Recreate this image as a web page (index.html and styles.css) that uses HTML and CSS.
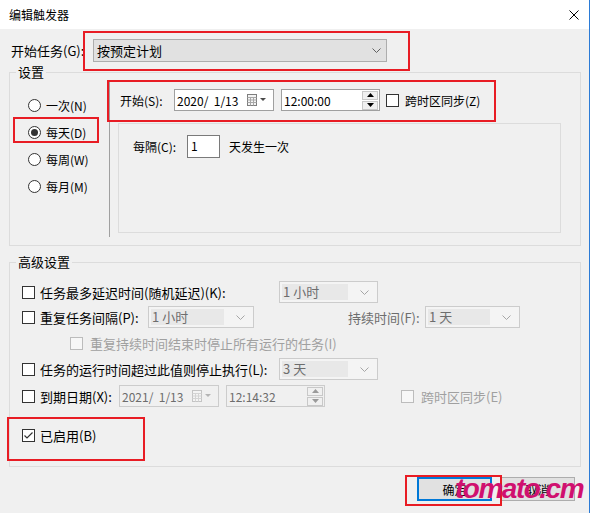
FILE: index.html
```html
<!DOCTYPE html>
<html lang="zh-CN">
<head>
    <meta charset="UTF-8">
    <meta name="viewport" content="width=device-width, initial-scale=1.0">
    <title>编辑触发器</title>
    <link rel="stylesheet" href="styles.css">
</head>
<body>
    <div class="window">
        <div class="titlebar">
            <span class="title">编辑触发器</span>
            <svg class="close" width="10" height="10" viewBox="0 0 10 10">
                <path d="M0.5 0.5 L9.5 9.5 M9.5 0.5 L0.5 9.5" stroke="#000" stroke-width="1" fill="none"/>
            </svg>
        </div>

        <div class="content">
            <div class="task-row">
                <span class="task-label">开始任务(G):</span>
                <div class="combo combo-main">
                    <span>按预定计划</span>
                    <svg width="9" height="5" viewBox="0 0 9 5"><path d="M0.5 0.5 L4.5 4.5 L8.5 0.5" stroke="#606060" fill="none"/></svg>
                </div>
            </div>

            <fieldset class="group">
                <legend>设置</legend>
                <div class="settings-body">
                    <div class="freq-list">
                        <div class="radio-row"><span class="radio"></span>一次(N)</div>
                        <div class="radio-row"><span class="radio checked"></span>每天(D)</div>
                        <div class="radio-row"><span class="radio"></span>每周(W)</div>
                        <div class="radio-row"><span class="radio"></span>每月(M)</div>
                    </div>
                    <div class="freq-detail">
                        <div class="start-row">
                            <span class="start-label">开始(S):</span>
                            <div class="field date-box">
                                <span class="field-text">2020/  1/13</span>
                                <svg class="cal-icon" width="20" height="12" viewBox="0 0 20 12">
                                    <rect x="0.5" y="0.5" width="9" height="11" fill="#f4f4f4" stroke="#7d7d7d"/>
                                    <path d="M0.5 3.5 H9.5 M0.5 6 H9.5 M0.5 8.5 H9.5 M3.5 3.5 V11.5 M6.5 3.5 V11.5" stroke="#a8a8a8" fill="none"/>
                                    <path d="M13 4 L19 4 L16 7 Z" fill="#4a4a4a"/>
                                </svg>
                            </div>
                            <div class="field time-box">
                                <span class="field-text">12:00:00</span>
                                <div class="spin">
                                    <span class="spin-btn"><svg width="7" height="4" viewBox="0 0 7 4"><path d="M0 4 L3.5 0 L7 4 Z" fill="#000"/></svg></span>
                                    <span class="spin-btn"><svg width="7" height="4" viewBox="0 0 7 4"><path d="M0 0 L3.5 4 L7 0 Z" fill="#000"/></svg></span>
                                </div>
                            </div>
                            <span class="check sync-check"></span>
                            <span>跨时区同步(Z)</span>
                        </div>
                        <div class="recur-box">
                            <div class="recur-row">
                                <span class="recur-label">每隔(C):</span>
                                <div class="num-box">1</div>
                                <span class="recur-unit">天发生一次</span>
                            </div>
                        </div>
                    </div>
                </div>
            </fieldset>

            <fieldset class="group advanced">
                <legend>高级设置</legend>
                <div class="advanced-body">
                    <div class="adv-row">
                        <div class="check-label w-long"><span class="check"></span>任务最多延迟时间(随机延迟)(K):</div>
                        <div class="combo combo-off w-99"><span class="combo-text">1 小时</span><svg width="9" height="5" viewBox="0 0 9 5"><path d="M0.5 0.5 L4.5 4.5 L8.5 0.5" stroke="#a6a6a6" fill="none"/></svg></div>
                    </div>
                    <div class="adv-row row-2">
                        <div class="check-label w-repeat"><span class="check"></span>重复任务间隔(P):</div>
                        <div class="combo combo-off w-106"><span class="combo-text">1 小时</span><svg width="9" height="5" viewBox="0 0 9 5"><path d="M0.5 0.5 L4.5 4.5 L8.5 0.5" stroke="#a6a6a6" fill="none"/></svg></div>
                        <span class="dur-label">持续时间(F):</span>
                        <div class="combo combo-off w-95"><span class="combo-text">1 天</span><svg width="9" height="5" viewBox="0 0 9 5"><path d="M0.5 0.5 L4.5 4.5 L8.5 0.5" stroke="#a6a6a6" fill="none"/></svg></div>
                    </div>
                    <div class="adv-row row-3">
                        <div class="check-label sub-option"><span class="check check-off"></span>重复持续时间结束时停止所有运行的任务(I)</div>
                    </div>
                    <div class="adv-row row-4">
                        <div class="check-label w-long"><span class="check"></span>任务的运行时间超过此值则停止执行(L):</div>
                        <div class="combo combo-off w-99"><span class="combo-text">3 天</span><svg width="9" height="5" viewBox="0 0 9 5"><path d="M0.5 0.5 L4.5 4.5 L8.5 0.5" stroke="#a6a6a6" fill="none"/></svg></div>
                    </div>
                    <div class="adv-row row-5">
                        <div class="check-label w-expire"><span class="check"></span>到期日期(X):</div>
                        <div class="field field-off date-box">
                            <span class="field-text">2021/  1/13</span>
                            <svg class="cal-icon" width="20" height="12" viewBox="0 0 20 12">
                                <rect x="0.5" y="0.5" width="9" height="11" fill="#f4f4f4" stroke="#c4c4c4"/>
                                <path d="M0.5 3.5 H9.5 M0.5 6 H9.5 M0.5 8.5 H9.5 M3.5 3.5 V11.5 M6.5 3.5 V11.5" stroke="#d4d4d4" fill="none"/>
                                <path d="M13 4 L19 4 L16 7 Z" fill="#b4b4b4"/>
                            </svg>
                        </div>
                        <div class="field field-off time-box">
                            <span class="field-text">12:14:32</span>
                            <div class="spin">
                                <span class="spin-btn"><svg width="7" height="4" viewBox="0 0 7 4"><path d="M0 4 L3.5 0 L7 4 Z" fill="#9a9a9a"/></svg></span>
                                <span class="spin-btn"><svg width="7" height="4" viewBox="0 0 7 4"><path d="M0 0 L3.5 4 L7 0 Z" fill="#9a9a9a"/></svg></span>
                            </div>
                        </div>
                        <div class="check-label sync-off"><span class="check check-off"></span>跨时区同步(E)</div>
                    </div>
                    <div class="adv-row row-6">
                        <div class="check-label">
                            <span class="check">
                                <svg width="11" height="11" viewBox="0 0 11 11"><path d="M1.5 5.5 L4 8 L9.5 2.5" stroke="#333" stroke-width="1.2" fill="none"/></svg>
                            </span>已启用(B)
                        </div>
                    </div>
                </div>
            </fieldset>

            <div class="button-row">
                <button class="btn btn-default">确定</button>
                <button class="btn">取消</button>
            </div>
        </div>

        <!-- red annotation frames -->
        <div class="mark mark-task"></div>
        <div class="mark mark-start"></div>
        <div class="mark mark-daily"></div>
        <div class="mark mark-enabled"></div>
        <div class="mark mark-ok"></div>

        <div class="watermark">tomato.cm</div>
    </div>
</body>
</html>
```

FILE: styles.css
```css
body {
    margin: 0;
    font-family: "Noto Sans CJK SC", "Microsoft YaHei", sans-serif;
    font-size: 12px;
    color: #000000;
    background-color: #f0f0f0;
}

.window {
    position: relative;
    width: 589px;
    height: 513px;
    border-right: 1px solid #2b7bd6;
    background-color: #f0f0f0;
    overflow: hidden;
}

.titlebar {
    height: 29px;
    background-color: #ffffff;
    display: flex;
    align-items: center;
    justify-content: space-between;
    padding: 0 10px 0 9px;
}

.title {
    line-height: 16px;
    margin-top: 1px;
}

.content {
    padding-top: 10px;
}

/* top combo row */
.task-row {
    display: flex;
    align-items: center;
    height: 23px;
    margin-left: 11px;
    font-size: 13px;
}

.task-label {
    width: 82px;
}

.combo {
    box-sizing: border-box;
    height: 22px;
    display: flex;
    align-items: center;
    justify-content: space-between;
}

.combo-main {
    width: 294px;
    height: 23px;
    border: 1px solid #adadad;
    background-color: #e1e1e1;
    padding: 0 5px 0 3px;
}

.combo-off {
    border: 1px solid #cccccc;
    background-color: #f4f4f4;
    padding: 2px 8px 2px 2px;
    color: #6d6d6d;
}

.combo-text {
    flex: 1;
    height: 16px;
    line-height: 16px;
    background-color: #e8e8e8;
    margin-right: 12px;
    padding-left: 1px;
}

.w-99 { width: 99px; }
.w-106 { width: 106px; }
.w-95 { width: 95px; }

/* group boxes */
.group {
    margin: 2px 0 0 9px;
    width: 572px;
    box-sizing: border-box;
    border: 1px solid #dcdcdc;
    padding: 0;
    min-width: 0;
}

legend {
    padding: 0 2px;
    margin-left: 6px;
    line-height: 16px;
    font-size: 13px;
}

.settings-body {
    display: flex;
    padding-bottom: 8px;
}

.freq-list {
    width: 100px;
    height: 157px;
    box-sizing: border-box;
    border-right: 1px solid #a0a0a0;
    padding: 12px 0 0 18px;
}

.radio-row {
    display: flex;
    align-items: center;
    gap: 5px;
    height: 27px;
}

.radio {
    width: 13px;
    height: 13px;
    box-sizing: border-box;
    border: 1px solid #333333;
    border-radius: 50%;
    background-color: #ffffff;
    display: flex;
    align-items: center;
    justify-content: center;
}

.radio.checked::after {
    content: "";
    width: 7px;
    height: 7px;
    border-radius: 50%;
    background-color: #333333;
}

.freq-detail {
    margin-left: 8px;
    padding-top: 9px;
}

.start-row {
    display: flex;
    align-items: center;
    height: 22px;
}

.start-label {
    width: 56px;
    padding-left: 2px;
    box-sizing: border-box;
}

.field {
    box-sizing: border-box;
    height: 22px;
    border: 1px solid #a0a0a0;
    background-color: #ffffff;
    display: flex;
    align-items: center;
    justify-content: space-between;
    padding: 0 1px 0 2px;
    font-size: 12px;
}

.field-off {
    border-color: #cccccc;
    background-color: #f0f0f0;
    color: #6d6d6d;
}

.field-text {
    white-space: pre;
}

.date-box {
    width: 100px;
    padding-right: 6px;
}

.time-box {
    width: 99px;
    margin-left: 7px;
}

.spin {
    display: flex;
    flex-direction: column;
}

.spin-btn {
    width: 16px;
    height: 9px;
    box-sizing: border-box;
    border: 1px solid #c8c8c8;
    background-color: #f0f0f0;
    display: flex;
    align-items: center;
    justify-content: center;
}

.spin-btn + .spin-btn {
    margin-top: 1px;
}

.check {
    width: 13px;
    height: 13px;
    box-sizing: border-box;
    border: 1px solid #333333;
    background-color: #ffffff;
    display: inline-flex;
    align-items: center;
    justify-content: center;
    flex-shrink: 0;
}

.check-off {
    border-color: #bcbcbc;
    background-color: #f7f7f7;
}

.sync-check {
    margin: 0 6px 0 6px;
}

.recur-box {
    margin-top: 12px;
    width: 443px;
    height: 110px;
    box-sizing: border-box;
    border: 1px solid #dcdcdc;
    padding: 11px 0 0 14px;
}

.recur-row {
    display: flex;
    align-items: center;
    height: 23px;
}

.recur-label {
    width: 54px;
}

.num-box {
    width: 33px;
    height: 23px;
    box-sizing: border-box;
    border: 1px solid #7a7a7a;
    background-color: #ffffff;
    padding-left: 3px;
    line-height: 20px;
}

.recur-unit {
    margin-left: 9px;
}

/* advanced settings */
.advanced {
    margin-top: 8px;
    font-size: 13px;
}

.advanced-body {
    padding: 11px 0 20px 12px;
}

.adv-row {
    display: flex;
    align-items: center;
    height: 22px;
}

.row-2 { margin-top: 3px; }
.row-3 { margin-top: 4px; }
.row-4 { margin-top: 4px; }
.row-5 { margin-top: 5px; }
.row-6 { margin-top: 17px; }

.check-label {
    display: flex;
    align-items: center;
    gap: 5px;
}

.w-long { width: 257px; }
.w-repeat { width: 126px; }
.w-expire { width: 97px; }

.sub-option {
    margin-left: 48px;
    gap: 7px;
    color: #a0a0a0;
}

.dur-label {
    width: 77px;
    margin-left: 94px;
    color: #6d6d6d;
}

.sync-off {
    margin-left: 76px;
    gap: 7px;
    color: #a0a0a0;
}

/* dialog buttons */
.button-row {
    display: flex;
    gap: 8px;
    margin: 10px 0 0 417px;
}

.btn {
    width: 75px;
    height: 24px;
    box-sizing: border-box;
    border: 1px solid #adadad;
    background-color: #e1e1e1;
    font-family: inherit;
    font-size: 12px;
    color: #000000;
    padding: 0;
}

.btn-default {
    border: 2px solid #0078d7;
}

/* red annotation frames drawn over the dialog */
.mark {
    position: absolute;
    box-sizing: border-box;
    border: 2px solid #e81c24;
}

.mark-task { left: 83px; top: 31px; width: 327px; height: 40px; }
.mark-start { left: 107px; top: 80px; width: 389px; height: 42px; }
.mark-daily { left: 13px; top: 117px; width: 86px; height: 26px; }
.mark-enabled { left: 7px; top: 417px; width: 138px; height: 44px; }
.mark-ok { left: 405px; top: 475px; width: 97px; height: 31px; }

.watermark {
    position: absolute;
    left: 455px;
    top: 475px;
    font-family: "Liberation Sans", Arial, sans-serif;
    font-size: 28px;
    line-height: 28px;
    font-weight: bold;
    font-style: italic;
    letter-spacing: -1.5px;
    color: #d0106f;
}
```
